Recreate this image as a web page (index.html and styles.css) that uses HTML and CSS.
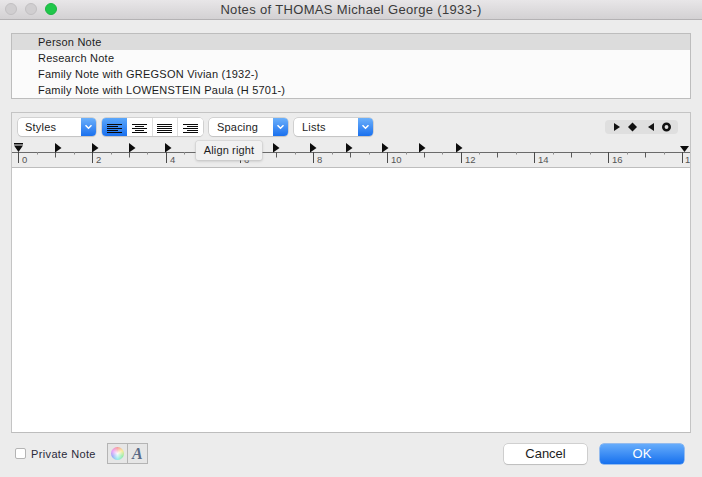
FILE: index.html
```html
<!DOCTYPE html>
<html lang="en">
<head>
<meta charset="utf-8">
<title>Notes</title>
<link rel="stylesheet" href="styles.css">
</head>
<body>
<div class="window">
  <header class="titlebar">
    <div class="lights"><span class="light"></span><span class="light"></span><span class="light green"></span></div>
    <div class="title">Notes of THOMAS Michael George (1933-)</div>
  </header>
  <main class="content">
    <ul class="note-list">
      <li class="note selected">Person Note</li>
      <li class="note">Research Note</li>
      <li class="note">Family Note with GREGSON Vivian (1932-)</li>
      <li class="note">Family Note with LOWENSTEIN Paula (H 5701-)</li>
    </ul>
    <section class="editor">
      <div class="toolbar">
        <div class="select styles"><span class="select-label">Styles</span><span class="arrow"><svg width="9" height="6" viewBox="0 0 9 6"><path d="M1.500 1.200 4.500 4.200 7.500 1.200" fill="none" stroke="#fff" stroke-width="1.500"/></svg></span></div>
        <div class="align-group">
          <button class="align active"><svg width="15" height="9" viewBox="0 0 15 9"><path d="M0 .5H15M0 2.500H11M0 4.500H15M0 6.500H11M0 8.500H15" stroke="#0a0a0a" fill="none"/></svg></button>
          <button class="align"><svg width="15" height="9" viewBox="0 0 15 9"><path d="M0 .5H15M3 2.500H12M0 4.500H15M3 6.500H12M0 8.500H15" stroke="#0a0a0a" fill="none"/></svg></button>
          <button class="align"><svg width="15" height="9" viewBox="0 0 15 9"><path d="M0 .5H15M0 2.500H15M0 4.500H15M0 6.500H15M0 8.500H15" stroke="#0a0a0a" fill="none"/></svg></button>
          <button class="align"><svg width="15" height="9" viewBox="0 0 15 9"><path d="M0 .5H15M4 2.500H15M0 4.500H15M4 6.500H15M0 8.500H15" stroke="#0a0a0a" fill="none"/></svg></button>
        </div>
        <div class="select spacing"><span class="select-label">Spacing</span><span class="arrow"><svg width="9" height="6" viewBox="0 0 9 6"><path d="M1.500 1.200 4.500 4.200 7.500 1.200" fill="none" stroke="#fff" stroke-width="1.500"/></svg></span></div>
        <div class="select lists"><span class="select-label">Lists</span><span class="arrow"><svg width="9" height="6" viewBox="0 0 9 6"><path d="M1.500 1.200 4.500 4.200 7.500 1.200" fill="none" stroke="#fff" stroke-width="1.500"/></svg></span></div>
        <div class="marks">
          <svg width="73" height="14" viewBox="0 0 73 14">
            <path d="M9 3 15 7 9 11Z" fill="#111"/>
            <path d="M23 7 27.500 2.500 32 7 27.500 11.500Z" fill="#111"/>
            <path d="M49 3V11L43 7Z" fill="#111"/>
            <circle cx="61.500" cy="7" r="3.200" fill="none" stroke="#111" stroke-width="2.600"/>
          </svg>
        </div>
      </div>
      <svg class="ruler" width="678" height="28" viewBox="0 0 678 28">
        <path class="ruler-line" d="M0 13.500H678"/>
        <path class="ruler-major" d="M6.500 13V24M80.500 13V24M154.500 13V24M228.500 13V24M301.500 13V24M375.500 13V24M449.500 13V24M522.500 13V24M596.500 13V24M670.500 13V24"/>
        <path class="ruler-mid" d="M43.500 13V18.500M117.500 13V18.500M190.500 13V18.500M264.500 13V18.500M338.500 13V18.500M412.500 13V18.500M485.500 13V18.500M559.500 13V18.500M633.500 13V18.500"/>
        <path class="ruler-minor" d="M25.500 13V15.500M62.500 13V15.500M99.500 13V15.500M135.500 13V15.500M172.500 13V15.500M209.500 13V15.500M246.500 13V15.500M283.500 13V15.500M320.500 13V15.500M357.500 13V15.500M394.500 13V15.500M430.500 13V15.500M467.500 13V15.500M504.500 13V15.500M541.500 13V15.500M578.500 13V15.500M615.500 13V15.500M652.500 13V15.500"/>
        <g class="ruler-nums">
          <text x="10" y="24">0</text><text x="84" y="24">2</text><text x="158" y="24">4</text><text x="232" y="24">6</text><text x="305" y="24">8</text><text x="379" y="24">10</text><text x="453" y="24">12</text><text x="526" y="24">14</text><text x="600" y="24">16</text><text x="673" y="24">1</text>
        </g>
        <g class="ruler-tabs">
          <path d="M2 4H11V5.500H2Z M2 6.500H11L6.500 13Z"/>
          <path d="M43 4 49.500 9 43 13.500Z"/><path d="M80 4 86.500 9 80 13.500Z"/><path d="M117 4 123.500 9 117 13.500Z"/><path d="M153 4 159.500 9 153 13.500Z"/><path d="M190 4 196.500 9 190 13.500Z"/><path d="M227 4 233.500 9 227 13.500Z"/><path d="M261 4 267.500 9 261 13.500Z"/><path d="M298 4 304.500 9 298 13.500Z"/><path d="M334 4 340.500 9 334 13.500Z"/><path d="M370 4 376.500 9 370 13.500Z"/><path d="M407 4 413.500 9 407 13.500Z"/><path d="M444 4 450.500 9 444 13.500Z"/>
          <path d="M668 7H677L672.500 13Z"/>
        </g>
      </svg>
      <div class="tooltip">Align right</div>
      <div class="text-area"></div>
    </section>
    <footer class="footer">
      <label class="private"><span class="checkbox"></span>Private Note</label>
      <div class="tools">
        <span class="tool"><span class="wheel"></span></span>
        <span class="tool font-tool">A</span>
      </div>
      <div class="buttons">
        <button class="btn">Cancel</button>
        <button class="btn primary">OK</button>
      </div>
    </footer>
  </main>
</div>
</body>
</html>
```
FILE: styles.css
```css
* { box-sizing: border-box; }
html, body { margin: 0; padding: 0; }
body {
  width: 702px; height: 477px; overflow: hidden;
  font-family: "Liberation Sans", Arial, sans-serif;
  font-size: 11px; color: #1c1c1c; background: #ececec;
}
.window { display: flex; flex-direction: column; height: 477px; }
.titlebar {
  position: relative; height: 20px; flex: none;
  display: flex; align-items: center; justify-content: center;
  background: linear-gradient(#e8e6e8, #d3d1d3);
  border-bottom: 1px solid #b4b2b4;
}
.lights { position: absolute; left: 5px; top: 3px; display: flex; gap: 8px; }
.light { width: 12px; height: 12px; border-radius: 50%; background: #d0ced0; border: 1px solid #c2c0c2; }
.light.green { background: #1fc74a; border-color: #1bb542; }
.title { font-size: 13px; color: #3a3a3a; letter-spacing: .34px; }
.content { flex: 1; padding: 13px 11px 0; display: flex; flex-direction: column; }
.note-list {
  list-style: none; margin: 0; padding: 0; height: 66px;
  background: #fbfbfb; border: 1px solid #bdbdbd;
}
.note { height: 16px; line-height: 16px; padding-left: 26px; letter-spacing: .22px; }
.note.selected { background: #dcdcdc; }
.editor {
  position: relative; margin-top: 13px; height: 321px;
  border: 1px solid #c4c4c4; border-bottom-color: #bdbdbd;
  display: flex; flex-direction: column;
}
.toolbar { display: flex; align-items: flex-start; height: 26px; padding: 5px 12px 0 6px; flex: none; }
.select {
  display: flex; height: 18px; width: 79px; background: #fff;
  border-radius: 4px; box-shadow: 0 0 0 .5px #b8b8b8, 0 1px 1px rgba(0,0,0,.12);
  overflow: hidden;
}
.select-label { flex: 1; padding-left: 8px; line-height: 18px; letter-spacing: .2px; }
.arrow {
  width: 15px; display: flex; align-items: center; justify-content: center;
  background: linear-gradient(#6cb0fb, #1a70ee);
}
.select.styles { width: 78px; margin-right: 6px; }
.styles .select-label { padding-left: 7px; }
.spacing { margin-left: 6px; margin-right: 6px; }
.align-group {
  display: flex; height: 18px; width: 101px; background: #fff; border-radius: 4px;
  box-shadow: 0 0 0 .5px #b8b8b8, 0 1px 1px rgba(0,0,0,.12); overflow: hidden;
}
.align {
  flex: 1; padding: 2px 0 0; border: 0; border-right: 1px solid #dcdcdc; background: #fff;
  display: flex; align-items: center; justify-content: center;
}
.align:last-child { border-right: 0; }
.align.active { background: linear-gradient(#5ba7fb, #1a70ee); border-right: 0; }
.marks {
  margin-left: auto; margin-top: 2px; width: 73px; height: 14px;
  background: #dfdfdf; border-radius: 4px; display: flex;
}
.ruler { display: block; flex: none; }
.ruler-line { stroke: #6a6a6a; fill: none; }
.ruler-major { stroke: #4a4a4a; fill: none; }
.ruler-mid { stroke: #5a5a5a; fill: none; }
.ruler-minor { stroke: #8a8a8a; fill: none; }
.ruler-nums { font-family: "Liberation Sans", Arial, sans-serif; font-size: 9.500px; fill: #555; }
.ruler-tabs { fill: #0c0c0c; }
.tooltip {
  position: absolute; left: 184px; top: 28px; width: 66px; height: 19px;
  background: #f1f1f1; border-radius: 2px; line-height: 19px; text-align: center;
  box-shadow: 0 0 0 .5px #cfcfcf, 0 1px 3px rgba(0,0,0,.22); letter-spacing: .15px;
}
.text-area { flex: 1; background: #fff; border-top: 1px solid #bdbdbd; }
.footer { display: flex; align-items: center; height: 41px; padding: 0 7px 0 4px; }
.private { display: flex; align-items: center; letter-spacing: .36px; color: #2a2a3a; }
.checkbox {
  width: 11px; height: 11px; margin-right: 5px; background: #fff;
  border: 1px solid #b4b4b4; border-radius: 2px;
}
.tools { display: flex; margin-left: 11px; border: 1px solid #b4b4b4; height: 21px; width: 41px; background: #e6e6e6; }
.tool { flex: 1; display: flex; align-items: center; justify-content: center; }
.tool + .tool { border-left: 1px solid #b4b4b4; }
.wheel {
  width: 13px; height: 13px; border-radius: 50%;
  background: radial-gradient(circle, rgba(255,255,255,.95) 0, rgba(255,255,255,.1) 100%),
    conic-gradient(#f05a5a, #f4dc4a, #4fe06a, #4fe0e0, #5a74f2, #e05af0, #f05a5a);
}
.font-tool {
  font-family: "Liberation Serif", serif; font-weight: bold; font-style: italic;
  font-size: 16px; color: #5a6a86;
}
.buttons { margin-left: auto; display: flex; gap: 13px; }
.btn {
  width: 83px; height: 20px; padding: 0; border: 0; border-radius: 4px; background: #fff;
  font: 13px "Liberation Sans", Arial, sans-serif; color: #1c1c1c;
  box-shadow: 0 0 0 .5px #b4b4b4, 0 1px 1px rgba(0,0,0,.15);
}
.btn.primary { background: linear-gradient(#66acfb, #1670ee); color: #fff; box-shadow: 0 0 0 .5px #3d8af0; width: 84px; }
```
